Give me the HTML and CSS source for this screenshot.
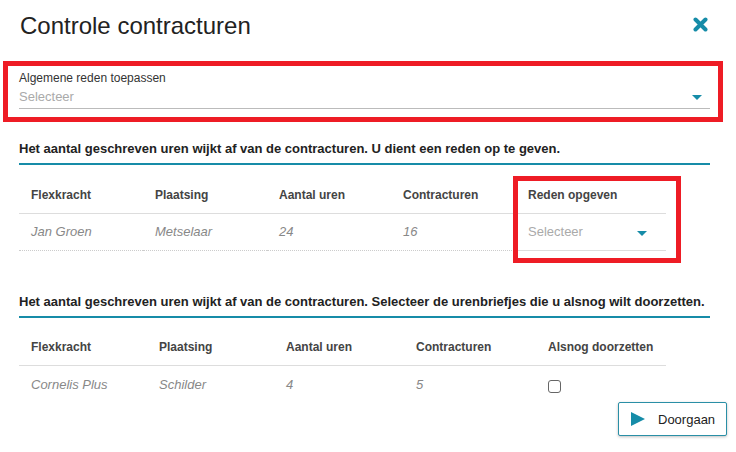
FILE: index.html
```html
<!DOCTYPE html>
<html lang="nl">
<head>
  <meta charset="UTF-8" />
  <meta name="viewport" content="width=device-width, initial-scale=1.0" />
  <title>Controle contracturen</title>
  <link rel="stylesheet" href="styles.css">
</head>
<body>
  <div class="dialog">
    <header class="dialog-header">
      <h1 class="dialog-title">Controle contracturen</h1>
      <button class="close-btn" aria-label="Sluiten">
        <svg width="15" height="15" viewBox="0 0 15 15">
          <path d="M2.5 2.5 L12.5 12.5 M12.5 2.5 L2.5 12.5" stroke="#168ca8" stroke-width="4" stroke-linecap="round" fill="none"/>
        </svg>
      </button>
    </header>

    <div class="general-reason">
      <label class="field-label">Algemene reden toepassen</label>
      <div class="select-field">
        <span class="placeholder">Selecteer</span>
        <span class="caret"></span>
      </div>
    </div>

    <section class="block block-reason">
      <h2 class="block-title">Het aantal geschreven uren wijkt af van de contracturen. U dient een reden op te geven.</h2>
      <div class="grid-wrap">
        <table class="grid grid-reason">
          <colgroup>
            <col class="c124"><col class="c124"><col class="c124"><col class="c125"><col class="c150">
          </colgroup>
          <thead>
            <tr>
              <th>Flexkracht</th>
              <th>Plaatsing</th>
              <th>Aantal uren</th>
              <th>Contracturen</th>
              <th>Reden opgeven</th>
            </tr>
          </thead>
          <tbody>
            <tr>
              <td>Jan Groen</td>
              <td>Metselaar</td>
              <td>24</td>
              <td>16</td>
              <td class="reason-cell">
                <div class="cell-select">
                  <span class="placeholder">Selecteer</span>
                  <span class="caret caret-low"></span>
                </div>
              </td>
            </tr>
          </tbody>
        </table>
        <div class="highlight"></div>
      </div>
    </section>

    <section class="block block-continue">
      <h2 class="block-title">Het aantal geschreven uren wijkt af van de contracturen. Selecteer de urenbriefjes die u alsnog wilt doorzetten.</h2>
      <table class="grid grid-continue">
        <colgroup>
          <col class="c128"><col class="c127"><col class="c130"><col class="c132"><col class="c130">
        </colgroup>
        <thead>
          <tr>
            <th>Flexkracht</th>
            <th>Plaatsing</th>
            <th>Aantal uren</th>
            <th>Contracturen</th>
            <th>Alsnog doorzetten</th>
          </tr>
        </thead>
        <tbody>
          <tr>
            <td>Cornelis Plus</td>
            <td>Schilder</td>
            <td>4</td>
            <td>5</td>
            <td><input type="checkbox" class="check"></td>
          </tr>
        </tbody>
      </table>
    </section>

    <div class="actions">
      <button class="btn-continue">
        <svg class="play" width="14" height="14" viewBox="0 0 14 14">
          <polygon points="0,0 14,7 0,14" fill="#168ca8"/>
        </svg>
        <span>Doorgaan</span>
      </button>
    </div>
  </div>
</body>
</html>
```

FILE: styles.css
```css
body {
  margin: 0;
  background: #fff;
  color: #222;
  font-family: "Liberation Sans", Arial, sans-serif;
}
.dialog {
  width: 736px;
  height: 452px;
  overflow: hidden;
}
.dialog-header {
  display: flex;
  justify-content: space-between;
  align-items: flex-start;
  padding: 12px 28px 0 20px;
}
.dialog-title {
  margin: 0;
  font-size: 24px;
  line-height: 28px;
  font-weight: normal;
  color: #222;
}
.close-btn {
  margin-top: 5px;
  padding: 0;
  border: 0;
  background: none;
  width: 15px;
  height: 15px;
  display: block;
}
.close-btn svg {
  display: block;
}

/* algemene reden */
.general-reason {
  margin: 21px 13px 0 3px;
  border: 5px solid #ee1c25;
  padding: 5px 8px 8px 11px;
}
.field-label {
  display: block;
  font-size: 12px;
  line-height: 14px;
  color: #333;
}
.select-field {
  margin-top: 4px;
  display: flex;
  justify-content: space-between;
  align-items: center;
  padding: 0 8px 3px 0;
  border-bottom: 1px solid #bbb;
}
.placeholder {
  font-size: 13px;
  line-height: 16px;
  color: #aaa;
}
.caret {
  width: 0;
  height: 0;
  border-left: 5px solid transparent;
  border-right: 5px solid transparent;
  border-top: 5px solid #168ca8;
}
.caret-low {
  margin-top: 2px;
}

/* blokken */
.block {
  padding: 0 26px 0 19px;
}
.block-reason {
  margin-top: 19px;
}
.block-continue {
  margin-top: 43px;
}
.block-title {
  margin: 0;
  padding-bottom: 6px;
  border-bottom: 2px solid #168ca8;
  font-size: 13px;
  line-height: 16px;
  font-weight: bold;
  color: #222;
}
.grid-wrap {
  position: relative;
}
.grid {
  width: 647px;
  table-layout: fixed;
  border-collapse: collapse;
}
.c124 { width: 124px; }
.c125 { width: 125px; }
.c127 { width: 127px; }
.c128 { width: 128px; }
.c130 { width: 130px; }
.c132 { width: 132px; }
.c150 { width: 150px; }
.grid th {
  text-align: left;
  padding: 23px 12px 11px;
  font-size: 12px;
  line-height: 14px;
  font-weight: bold;
  color: #444;
  border-bottom: 1px solid #ddd;
}
.grid td {
  padding: 10px 12px;
  font-size: 13px;
  line-height: 16px;
  font-style: italic;
  color: #888;
}
.grid-continue th {
  padding-top: 22px;
}
.grid-continue td {
  padding-top: 11px;
  padding-bottom: 9px;
}
.grid-reason td {
  border-bottom: 1px dotted #ccc;
}
.grid-reason td.reason-cell {
  padding-right: 19px;
  border-bottom: 1px solid #ddd;
  font-style: normal;
}
.cell-select {
  display: flex;
  justify-content: space-between;
  align-items: center;
}
.highlight {
  position: absolute;
  left: 494px;
  top: 11px;
  width: 158px;
  height: 77px;
  border: 5px solid #ee1c25;
}
.check {
  appearance: none;
  display: block;
  margin: 3px 0 0;
  width: 13px;
  height: 13px;
  border: 1px solid #666;
  border-radius: 3px;
  background: #fff;
}

/* acties */
.actions {
  display: flex;
  justify-content: flex-end;
  padding-right: 9px;
}
.btn-continue {
  width: 109px;
  height: 34px;
  box-sizing: border-box;
  display: flex;
  align-items: center;
  gap: 13px;
  padding: 0 0 0 12px;
  background: #fff;
  border: 1px solid #2a8fa6;
  border-radius: 2px;
  box-shadow: 0 1px 3px rgba(0, 0, 0, 0.25);
  font-family: "Liberation Sans", Arial, sans-serif;
  font-size: 13px;
  color: #222;
}
.play {
  display: block;
  flex: none;
}
```
